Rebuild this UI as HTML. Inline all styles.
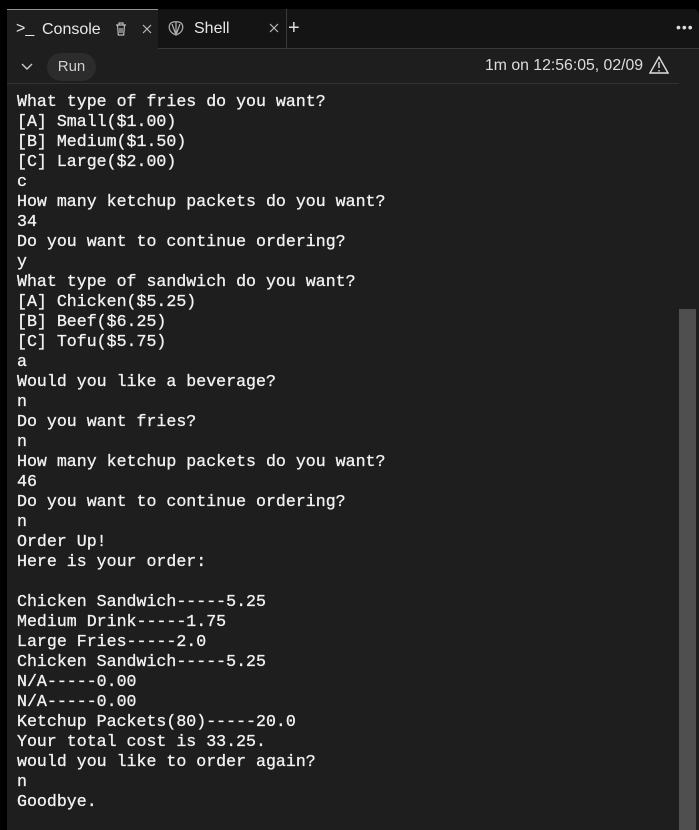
<!DOCTYPE html>
<html><head><meta charset="utf-8"><style>
html,body{margin:0;padding:0;width:699px;height:830px;overflow:hidden;background:#000;}
.panel{position:absolute;left:7px;top:9px;width:692px;height:821px;background:#1e1e1e;border-top-right-radius:6px;}
.tabbar{position:absolute;left:0;top:0;width:692px;height:39px;background:#141414;border-bottom:1px solid #3a3a3a;border-top-right-radius:6px;}
.tab{position:absolute;top:0;height:40px;font:16px "Liberation Sans",sans-serif;color:#e8e8e8;}
.t1{left:0;width:151px;background:#1e1e1e;border-top:1px solid #6aa0c8;box-sizing:border-box;}
.t2{left:152px;width:127px;border-right:1px solid #3a3a3a;height:39px;}
.toolbar{position:absolute;left:0;top:40px;width:672px;height:34px;border-bottom:1px solid #333;}
.run{position:absolute;left:40px;top:4px;width:49px;height:28px;border-radius:14px;background:#2c2c2c;color:#cfcfcf;font:15px "Liberation Sans",sans-serif;line-height:28px;text-align:center;}
pre{position:absolute;left:10px;top:83px;margin:0;font:16.6px/20px "Liberation Mono",monospace;color:#f2f2f2;-webkit-text-stroke:0.3px #f2f2f2;}
.thumb{position:absolute;left:672px;top:300px;width:17px;height:521px;background:#4f4f4f;}
</style></head><body>
<div class="panel">
<div class="tabbar">
 <div class="tab t1">
  <span style="position:absolute;left:9px;top:10px;">&gt;_</span>
  <span style="position:absolute;left:35px;top:11px;">Console</span>
  <svg style="position:absolute;left:108px;top:12px" width="12" height="14" viewBox="0 0 12 14" fill="none" stroke="#bbb" stroke-width="1.2"><path d="M1 3h10M4 3V1h4v2M2.5 3l.8 10h5.4l.8-10M5 6v5M7 6v5"/></svg>
  <svg style="position:absolute;left:135px;top:14px" width="10" height="10" viewBox="0 0 10 10" stroke="#bbb" stroke-width="1.2"><path d="M1 1l8 8M9 1l-8 8"/></svg>
 </div>
 <div class="tab t2">
  <svg style="position:absolute;left:8px;top:11px" width="18" height="16" viewBox="0 0 18 16" fill="none" stroke="#aaa" stroke-width="1.3"><path d="M9 15C3 13 1 8 3 4 5 1 13 1 15 4 17 8 15 13 9 15ZM9 15V2M9 15L5 4M9 15L13 4"/></svg>
  <span style="position:absolute;left:35px;top:11px;">Shell</span>
  <svg style="position:absolute;left:110px;top:14px" width="10" height="10" viewBox="0 0 10 10" stroke="#bbb" stroke-width="1.2"><path d="M1 1l8 8M9 1l-8 8"/></svg>
 </div>
 <div class="tab" style="left:281px;top:8px;font-size:20px;color:#ddd;">+</div>
 <div class="tab" style="left:669px;top:10px;font-size:14px;color:#ddd;letter-spacing:1px;">•••</div>
</div>
<div class="toolbar">
 <svg style="position:absolute;left:14px;top:14px" width="12" height="8" viewBox="0 0 12 8" fill="none" stroke="#ccc" stroke-width="1.4"><path d="M1 1l5 5 5-5"/></svg>
 <div class="run">Run</div>
 <span style="position:absolute;left:478px;top:8px;font:15.8px 'Liberation Sans',sans-serif;color:#ddd;">1m on 12:56:05, 02/09</span>
 <svg style="position:absolute;left:642px;top:7px" width="20" height="18" viewBox="0 0 20 18" fill="none" stroke="#ddd" stroke-width="1.4"><path d="M10 1L19 17H1Z"/><path d="M10 6v6M10 14v1.5"/></svg>
</div>
<pre>What type of fries do you want?
[A] Small($1.00)
[B] Medium($1.50)
[C] Large($2.00)
c
How many ketchup packets do you want?
34
Do you want to continue ordering?
y
What type of sandwich do you want?
[A] Chicken($5.25)
[B] Beef($6.25)
[C] Tofu($5.75)
a
Would you like a beverage?
n
Do you want fries?
n
How many ketchup packets do you want?
46
Do you want to continue ordering?
n
Order Up!
Here is your order:

Chicken Sandwich-----5.25
Medium Drink-----1.75
Large Fries-----2.0
Chicken Sandwich-----5.25
N/A-----0.00
N/A-----0.00
Ketchup Packets(80)-----20.0
Your total cost is 33.25.
would you like to order again?
n
Goodbye.</pre>
<div class="thumb"></div>
</div>
</body></html>
